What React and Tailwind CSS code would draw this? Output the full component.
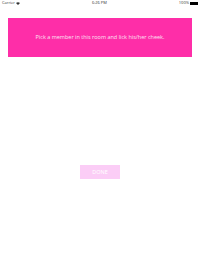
export default function App() {
  return (
    <div className="w-[200px] h-[266px] bg-white relative overflow-hidden" style={{ fontFamily: '"Open Sans", "Liberation Sans", sans-serif' }}>
      <div className="h-[6px] flex items-center justify-between px-[2px] text-[4px] leading-none text-[#333]">
        <div className="flex items-center gap-[1px]">
          <span>Carrier</span>
          <svg width="4" height="3" viewBox="0 0 4 3"><path d="M0 1 Q2 -0.5 4 1 L2 3 Z" fill="#333" /></svg>
        </div>
        <span>6:26 PM</span>
        <div className="flex items-center gap-[1px]">
          <span>100%</span>
          <div className="w-[8px] h-[3px] bg-black" />
        </div>
      </div>
      <div className="mx-[8px] mt-[12px] h-[39px] bg-[#fe2ea8] flex items-center justify-center">
        <span className="text-[5.5px] text-[#fbe4f3]">Pick a member in this room and lick his/her cheek.</span>
      </div>
      <div className="flex justify-center mt-[108px]">
        <div className="w-[40px] h-[14px] bg-[#fbcdf6] flex items-center justify-center text-[5.5px] text-white">DONE</div>
      </div>
    </div>
  );
}
